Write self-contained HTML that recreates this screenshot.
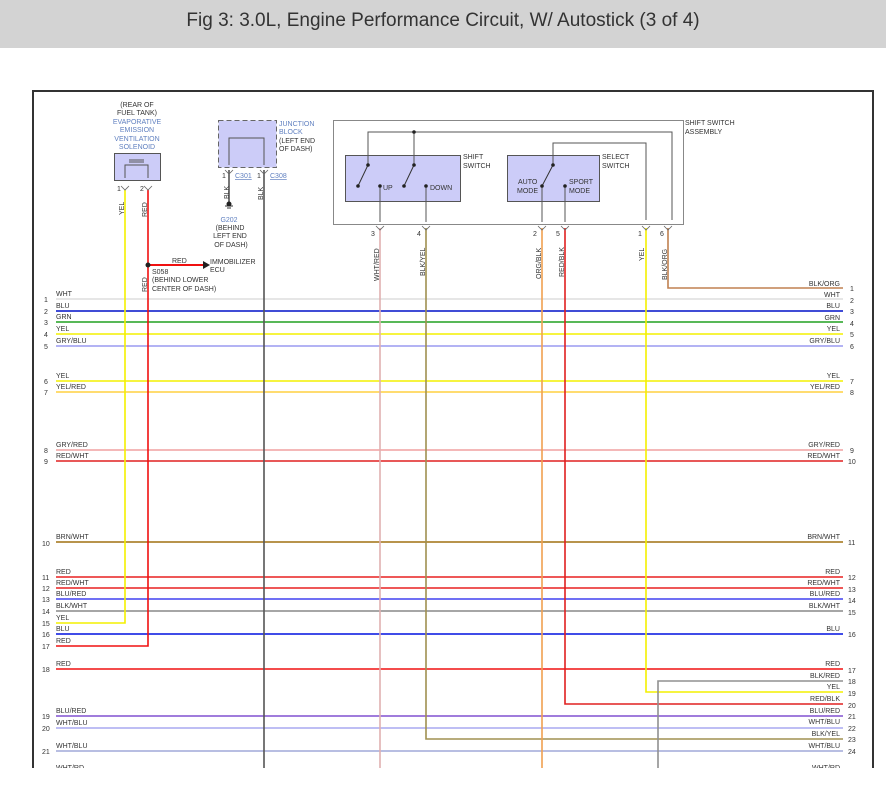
<!DOCTYPE html>
<html><head><meta charset="utf-8"><style>
body{margin:0;width:886px;height:798px;background:#fff;overflow:hidden;font-family:"Liberation Sans",sans-serif}
.hd{position:absolute;left:0;top:0;width:886px;height:48px;background:#d3d3d3;text-align:center;line-height:42px;font-size:19px;color:#333}
svg{position:absolute;left:0;top:0}
text{font-family:"Liberation Sans",sans-serif;font-size:7px;fill:#333}
.b{fill:#6080c0}
</style></head><body>
<div class="hd">Fig 3: 3.0L, Engine Performance Circuit, W/ Autostick (3 of 4)</div>
<svg width="886" height="798" viewBox="0 0 886 798">
<g fill="none">
<path d="M33 768V91H873V768" stroke="#333" stroke-width="2"/>
<g stroke-width="1.6">
<path d="M56 299H843" stroke="#ddd"/>
<path d="M56 311H843" stroke="#0010c8"/>
<path d="M56 322H843" stroke="#20a020"/>
<path d="M56 334H843" stroke="#f4f000"/>
<path d="M56 346H843" stroke="#9a9af0"/>
<path d="M56 381H843" stroke="#f4f000"/>
<path d="M56 392H843" stroke="#ffd040"/>
<path d="M56 450H843" stroke="#f0a0a0"/>
<path d="M56 461H843" stroke="#e02020"/>
<path d="M56 542H843" stroke="#a07010"/>
<path d="M56 577H843" stroke="#e82020"/>
<path d="M56 588H843" stroke="#e82020"/>
<path d="M56 599H843" stroke="#4040f0"/>
<path d="M56 611H843" stroke="#888"/>
<path d="M56 634H843" stroke="#0010e0"/>
<path d="M56 669H843" stroke="#f01010"/>
<path d="M56 716H843" stroke="#8050d0"/>
<path d="M56 728H843" stroke="#a8a8f0"/>
<path d="M56 751H843" stroke="#a0a8d8"/>
<path d="M426 228V739H843" stroke="#a09050"/>
<path d="M380 228V768" stroke="#e0b0b0"/>
<path d="M542 228V768" stroke="#f0a050"/>
<path d="M565 228V704H843" stroke="#e02020"/>
<path d="M646 228V692H843" stroke="#f4f000"/>
<path d="M668 228V288H843" stroke="#c08050"/>
<path d="M658 768V681H843" stroke="#909090"/>
<path d="M125 190V623H56" stroke="#f4f000"/>
<path d="M148 190V646H56" stroke="#f01010"/>
<path d="M148 265H205" stroke="#f01010" stroke-width="2"/>
<path d="M264 170V768" stroke="#555"/>
<path d="M229 170V205" stroke="#555"/>
</g>
<rect x="333.5" y="120.5" width="350" height="104" stroke="#888"/>
<rect x="345.5" y="155.5" width="115" height="46" fill="#ccccf8" stroke="#555"/>
<rect x="507.5" y="155.5" width="92" height="46" fill="#ccccf8" stroke="#555"/>
<path d="M368 165V132H672V220M414 132V165M646 220V143H553V165" stroke="#555"/>
<path d="M368 165L358 186M414 165L404 186M553 165L542 186" stroke="#333"/>
<path d="M380 186V222M426 186V222M542 186V222M565 186V222" stroke="#555"/>
<rect x="114.5" y="153.5" width="46" height="27" fill="#ccccf8" stroke="#555"/>
<path d="M125 178V165H148V178M129 160H144M129 162H144" stroke="#555"/>
<rect x="218.5" y="120.5" width="58" height="47" fill="#ccccf8" stroke="#666" stroke-dasharray="5,3"/>
<path d="M229 165V138H264V165" stroke="#555"/>
<path d="M225 206H233M227 208H231" stroke="#333"/>
</g>
<g fill="#222">
<circle cx="368" cy="165" r="1.8"/><circle cx="414" cy="165" r="1.8"/><circle cx="414" cy="132" r="1.8"/>
<circle cx="358" cy="186" r="1.8"/><circle cx="404" cy="186" r="1.8"/><circle cx="380" cy="186" r="1.8"/><circle cx="426" cy="186" r="1.8"/>
<circle cx="553" cy="165" r="1.8"/><circle cx="542" cy="186" r="1.8"/><circle cx="565" cy="186" r="1.8"/>
<circle cx="148" cy="265" r="2.5"/><circle cx="229" cy="204" r="2.5"/>
<path d="M203 261L210 265L203 269Z"/>
</g>
<g fill="none" stroke="#666" stroke-width="0.8">
<path d="M376 226L380 230L384 226M422 226L426 230L430 226M538 226L542 230L546 226M561 226L565 230L569 226M642 226L646 230L650 226M664 226L668 230L672 226M121 186L125 190L129 186M144 186L148 190L152 186M225 170L229 174L233 170M260 170L264 174L268 170"/>
</g>
<text x="137" y="107" text-anchor="middle">(REAR OF</text>
<text x="137" y="115" text-anchor="middle">FUEL TANK)</text>
<text x="137" y="124" text-anchor="middle" class="b">EVAPORATIVE</text>
<text x="137" y="132" text-anchor="middle" class="b">EMISSION</text>
<text x="137" y="141" text-anchor="middle" class="b">VENTILATION</text>
<text x="137" y="149" text-anchor="middle" class="b">SOLENOID</text>
<text x="117" y="191">1</text><text x="140" y="191">2</text>
<text x="279" y="126" class="b">JUNCTION</text><text x="279" y="134" class="b">BLOCK</text>
<text x="279" y="143">(LEFT END</text><text x="279" y="151">OF DASH)</text>
<text x="222" y="178">1</text><text x="235" y="178" class="b" text-decoration="underline">C301</text>
<text x="257" y="178">1</text><text x="270" y="178" class="b" text-decoration="underline">C308</text>
<text x="229" y="222" text-anchor="middle" class="b">G202</text>
<text x="230" y="230" text-anchor="middle">(BEHIND</text><text x="230" y="238" text-anchor="middle">LEFT END</text><text x="231" y="247" text-anchor="middle">OF DASH)</text>
<text x="172" y="263">RED</text>
<text x="210" y="264">IMMOBILIZER</text><text x="210" y="272">ECU</text>
<text x="152" y="274">S058</text><text x="152" y="282">(BEHIND LOWER</text><text x="152" y="291">CENTER OF DASH)</text>
<text transform="translate(124,215) rotate(-90)">YEL</text>
<text transform="translate(147,217) rotate(-90)">RED</text>
<text transform="translate(147,292) rotate(-90)">RED</text>
<text transform="translate(229,199) rotate(-90)">BLK</text>
<text transform="translate(263,200) rotate(-90)">BLK</text>
<text x="685" y="125">SHIFT SWITCH</text><text x="685" y="134">ASSEMBLY</text>
<text x="463" y="159">SHIFT</text><text x="463" y="168">SWITCH</text>
<text x="602" y="159">SELECT</text><text x="602" y="168">SWITCH</text>
<text x="383" y="190">UP</text><text x="430" y="190">DOWN</text>
<text x="518" y="184">AUTO</text><text x="517" y="193">MODE</text>
<text x="569" y="184">SPORT</text><text x="569" y="193">MODE</text>
<text x="371" y="236">3</text><text x="417" y="236">4</text><text x="533" y="236">2</text><text x="556" y="236">5</text><text x="638" y="236">1</text><text x="660" y="236">6</text>
<text transform="translate(379,281) rotate(-90)">WHT/RED</text>
<text transform="translate(425,276) rotate(-90)">BLK/YEL</text>
<text transform="translate(541,279) rotate(-90)">ORG/BLK</text>
<text transform="translate(564,277) rotate(-90)">RED/BLK</text>
<text transform="translate(644,261) rotate(-90)">YEL</text>
<text transform="translate(667,280) rotate(-90)">BLK/ORG</text>
<g>
<text x="56" y="296">WHT</text><text x="56" y="308">BLU</text><text x="56" y="319">GRN</text><text x="56" y="331">YEL</text><text x="56" y="343">GRY/BLU</text>
<text x="56" y="378">YEL</text><text x="56" y="389">YEL/RED</text><text x="56" y="447">GRY/RED</text><text x="56" y="458">RED/WHT</text>
<text x="56" y="539">BRN/WHT</text><text x="56" y="574">RED</text><text x="56" y="585">RED/WHT</text><text x="56" y="596">BLU/RED</text><text x="56" y="608">BLK/WHT</text>
<text x="56" y="620">YEL</text><text x="56" y="631">BLU</text><text x="56" y="643">RED</text><text x="56" y="666">RED</text>
<text x="56" y="713">BLU/RED</text><text x="56" y="725">WHT/BLU</text><text x="56" y="748">WHT/BLU</text><text x="56" y="770">WHT/RD</text>
</g>
<g fill="#555">
<text x="44" y="302">1</text><text x="44" y="314">2</text><text x="44" y="325">3</text><text x="44" y="337">4</text><text x="44" y="349">5</text>
<text x="44" y="384">6</text><text x="44" y="395">7</text><text x="44" y="453">8</text><text x="44" y="464">9</text><text x="42" y="546">10</text>
<text x="42" y="580">11</text><text x="42" y="591">12</text><text x="42" y="602">13</text><text x="42" y="614">14</text><text x="42" y="626">15</text><text x="42" y="637">16</text><text x="42" y="649">17</text><text x="42" y="672">18</text>
<text x="42" y="719">19</text><text x="42" y="731">20</text><text x="42" y="754">21</text>
</g>
<g text-anchor="end">
<text x="840" y="286">BLK/ORG</text><text x="840" y="297">WHT</text><text x="840" y="308">BLU</text><text x="840" y="320">GRN</text><text x="840" y="331">YEL</text><text x="840" y="343">GRY/BLU</text>
<text x="840" y="378">YEL</text><text x="840" y="389">YEL/RED</text><text x="840" y="447">GRY/RED</text><text x="840" y="458">RED/WHT</text><text x="840" y="539">BRN/WHT</text>
<text x="840" y="574">RED</text><text x="840" y="585">RED/WHT</text><text x="840" y="596">BLU/RED</text><text x="840" y="608">BLK/WHT</text><text x="840" y="631">BLU</text><text x="840" y="666">RED</text>
<text x="840" y="678">BLK/RED</text><text x="840" y="689">YEL</text><text x="840" y="701">RED/BLK</text><text x="840" y="713">BLU/RED</text><text x="840" y="724">WHT/BLU</text><text x="840" y="736">BLK/YEL</text><text x="840" y="748">WHT/BLU</text><text x="840" y="770">WHT/RD</text>
</g>
<g fill="#555">
<text x="850" y="291">1</text><text x="850" y="303">2</text><text x="850" y="314">3</text><text x="850" y="326">4</text><text x="850" y="337">5</text><text x="850" y="349">6</text>
<text x="850" y="384">7</text><text x="850" y="395">8</text><text x="850" y="453">9</text><text x="848" y="464">10</text><text x="848" y="545">11</text>
<text x="848" y="580">12</text><text x="848" y="592">13</text><text x="848" y="603">14</text><text x="848" y="615">15</text><text x="848" y="637">16</text>
<text x="848" y="673">17</text><text x="848" y="684">18</text><text x="848" y="696">19</text><text x="848" y="708">20</text><text x="848" y="719">21</text><text x="848" y="731">22</text><text x="848" y="742">23</text><text x="848" y="754">24</text>
</g>
<rect x="0" y="768" width="886" height="30" fill="#fff"/>
</svg>
</body></html>
